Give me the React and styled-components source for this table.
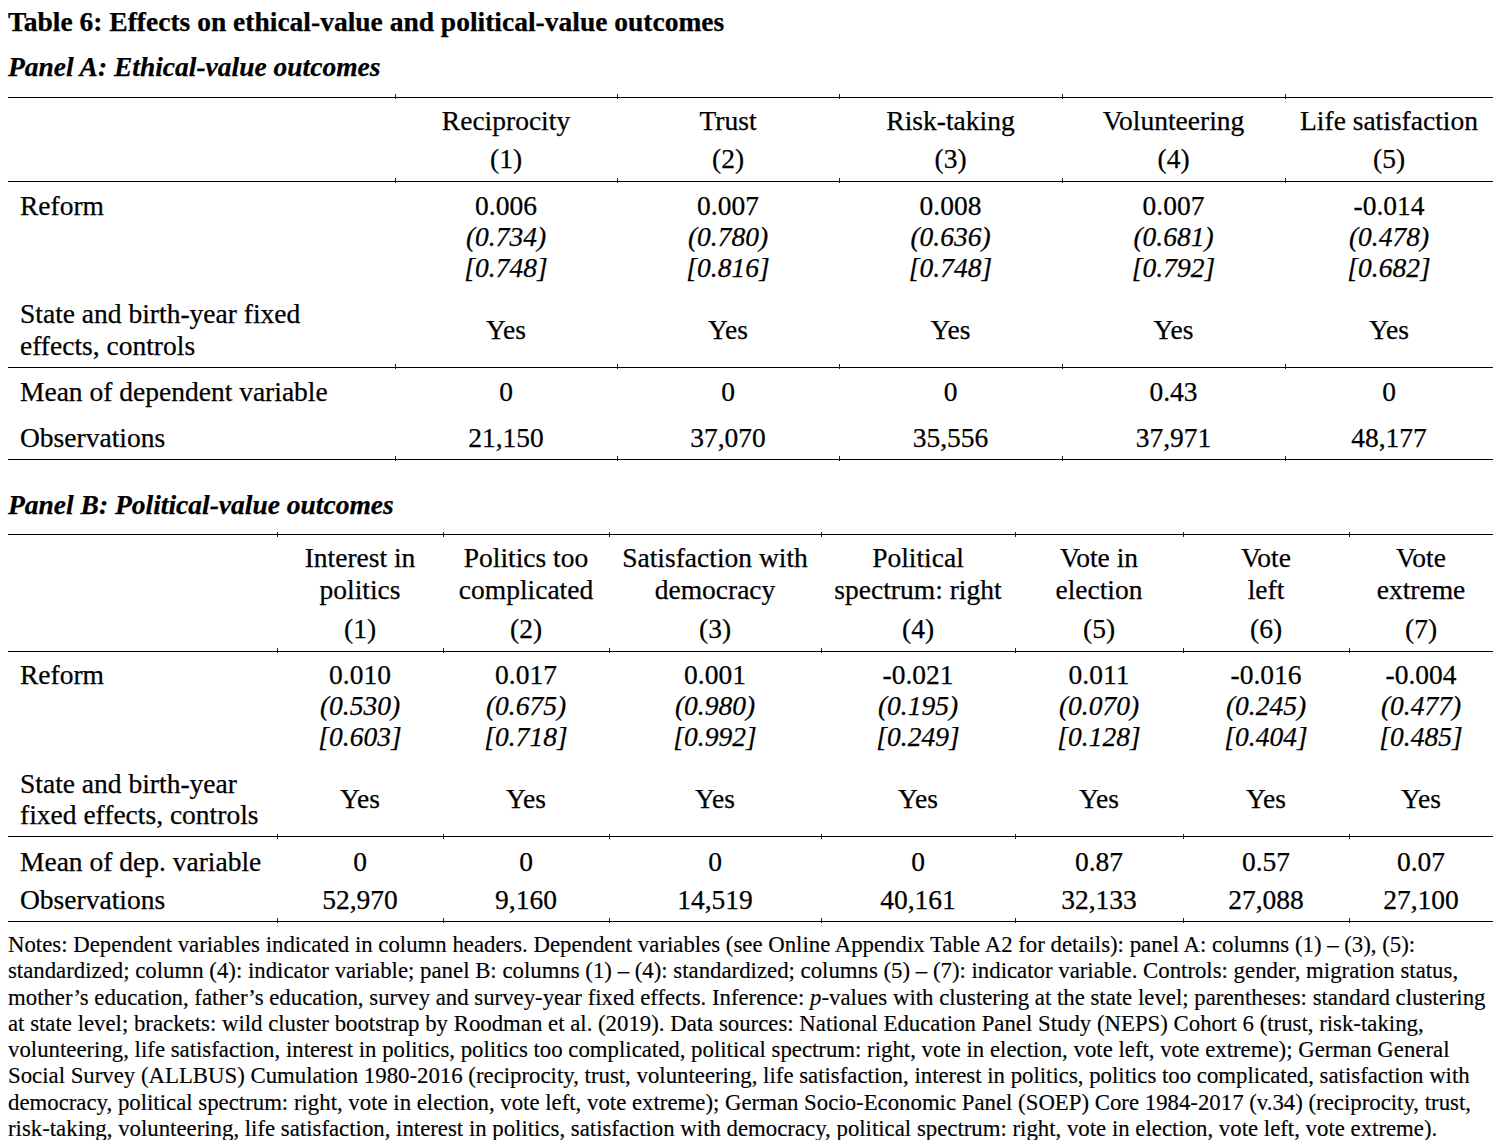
import React from "react";
import styled, { createGlobalStyle } from "styled-components";

const GlobalStyle = createGlobalStyle`
  html, body {
    margin: 0;
    padding: 0;
    background: #fff;
  }
  body {
    font-family: "Liberation Serif", "Times New Roman", serif;
    color: #000;
    -webkit-text-stroke: 0.25px #000;
  }
`;

const colsA = "387px 222px 222px 223px 223px 208px";
const colsB = "269px 166px 166px 212px 194px 168px 166px 144px";

const Page = styled.div`
  width: 1508px;
  box-sizing: border-box;
  padding: 5.5px 15px 0 8px;
  font-size: 27.5px;
  line-height: 31px;
`;

const Title = styled.h1`
  margin: 0 0 14px;
  font-size: 27.5px;
  line-height: 31px;
  font-weight: bold;
`;

const PanelTitle = styled.h2`
  margin: ${(p) => p.$mt || 0}px 0 ${(p) => p.$mb || 14}px;
  font-size: 27.5px;
  line-height: 31px;
  font-weight: bold;
  font-style: italic;
`;

const Rule = styled.div`
  display: grid;
  grid-template-columns: ${(p) => p.$cols};
  border-top: 1.5px solid #000;
  height: 0;
`;

const Tick = styled.span`
  position: relative;
  &::before {
    content: "";
    position: absolute;
    left: -0.5px;
    top: -3.5px;
    width: 1px;
    height: 5px;
    background: #222;
  }
`;

const Row = styled.div`
  display: grid;
  grid-template-columns: ${(p) => p.$cols};
  padding-top: ${(p) => p.$pt}px;
  padding-bottom: ${(p) => p.$pb}px;
  line-height: ${(p) => p.$lh || 31}px;
  align-items: ${(p) => (p.$top ? "start" : "center")};
`;

const Label = styled.div`
  padding-left: 12px;
  white-space: nowrap;
`;

const Cell = styled.div`
  text-align: center;
  white-space: nowrap;
`;

const HeadLine = styled.div`
  line-height: ${(p) => p.$lh || 31}px;
`;

const HeadNum = styled.div`
  margin-top: 7px;
  line-height: 31px;
`;

const Ital = styled.div`
  font-style: italic;
`;

const Notes = styled.div`
  margin-top: 10.5px;
  font-size: 22.8px;
  line-height: 26.3px;
  white-space: nowrap;
  -webkit-text-stroke: 0.15px #000;
`;

function TickRule({ cols, n }) {
  return (
    <Rule $cols={cols}>
      <span />
      {Array.from({ length: n }).map((_, i) => (
        <Tick key={i} />
      ))}
    </Rule>
  );
}

const panelA = {
  heads: ["Reciprocity", "Trust", "Risk-taking", "Volunteering", "Life satisfaction"],
  coef: ["0.006", "0.007", "0.008", "0.007", "-0.014"],
  p: ["(0.734)", "(0.780)", "(0.636)", "(0.681)", "(0.478)"],
  w: ["[0.748]", "[0.816]", "[0.748]", "[0.792]", "[0.682]"],
  mean: ["0", "0", "0", "0.43", "0"],
  obs: ["21,150", "37,070", "35,556", "37,971", "48,177"],
};

const panelB = {
  heads: [
    ["Interest in", "politics"],
    ["Politics too", "complicated"],
    ["Satisfaction with", "democracy"],
    ["Political", "spectrum: right"],
    ["Vote in", "election"],
    ["Vote", "left"],
    ["Vote", "extreme"],
  ],
  coef: ["0.010", "0.017", "0.001", "-0.021", "0.011", "-0.016", "-0.004"],
  p: ["(0.530)", "(0.675)", "(0.980)", "(0.195)", "(0.070)", "(0.245)", "(0.477)"],
  w: ["[0.603]", "[0.718]", "[0.992]", "[0.249]", "[0.128]", "[0.404]", "[0.485]"],
  mean: ["0", "0", "0", "0", "0.87", "0.57", "0.07"],
  obs: ["52,970", "9,160", "14,519", "40,161", "32,133", "27,088", "27,100"],
};

const notes = [
  "Notes: Dependent variables indicated in column headers. Dependent variables (see Online Appendix Table A2 for details): panel A: columns (1) – (3), (5):",
  "standardized; column (4): indicator variable; panel B: columns (1) – (4): standardized; columns (5) – (7): indicator variable. Controls: gender, migration status,",
  null,
  "at state level; brackets: wild cluster bootstrap by Roodman et al. (2019). Data sources: National Education Panel Study (NEPS) Cohort 6 (trust, risk-taking,",
  "volunteering, life satisfaction, interest in politics, politics too complicated, political spectrum: right, vote in election, vote left, vote extreme); German General",
  "Social Survey (ALLBUS) Cumulation 1980-2016 (reciprocity, trust, volunteering, life satisfaction, interest in politics, politics too complicated, satisfaction with",
  "democracy, political spectrum: right, vote in election, vote left, vote extreme); German Socio-Economic Panel (SOEP) Core 1984-2017 (v.34) (reciprocity, trust,",
  "risk-taking, volunteering, life satisfaction, interest in politics, satisfaction with democracy, political spectrum: right, vote in election, vote left, vote extreme).",
];

export default function App() {
  return (
    <Page>
      <GlobalStyle />
      <Title>Table 6: Effects on ethical-value and political-value outcomes</Title>
      <PanelTitle $mb={15}>Panel A: Ethical-value outcomes</PanelTitle>

      <TickRule cols={colsA} n={5} />
      <Row $cols={colsA} $pt={7.5} $pb={6.5}>
        <Label />
        {panelA.heads.map((h, i) => (
          <Cell key={h}>
            <HeadLine>{h}</HeadLine>
            <HeadNum>({i + 1})</HeadNum>
          </Cell>
        ))}
      </Row>
      <TickRule cols={colsA} n={5} />
      <Row $cols={colsA} $pt={8.5} $pb={7} $top>
        <Label>Reform</Label>
        {panelA.coef.map((c, i) => (
          <Cell key={i}>
            <div>{c}</div>
            <Ital>{panelA.p[i]}</Ital>
            <Ital>{panelA.w[i]}</Ital>
          </Cell>
        ))}
      </Row>
      <Row $cols={colsA} $pt={7.5} $pb={5} $lh={32}>
        <Label>
          State and birth-year fixed
          <br />
          effects, controls
        </Label>
        {panelA.coef.map((_, i) => (
          <Cell key={i}>Yes</Cell>
        ))}
      </Row>
      <TickRule cols={colsA} n={5} />
      <Row $cols={colsA} $pt={8} $pb={7}>
        <Label>Mean of dependent variable</Label>
        {panelA.mean.map((m, i) => (
          <Cell key={i}>{m}</Cell>
        ))}
      </Row>
      <Row $cols={colsA} $pt={8} $pb={6}>
        <Label>Observations</Label>
        {panelA.obs.map((o, i) => (
          <Cell key={i}>{o}</Cell>
        ))}
      </Row>
      <TickRule cols={colsA} n={5} />

      <PanelTitle $mt={29} $mb={14.5}>
        Panel B: Political-value outcomes
      </PanelTitle>

      <TickRule cols={colsB} n={7} />
      <Row $cols={colsB} $pt={7} $pb={6.5}>
        <Label />
        {panelB.heads.map((h, i) => (
          <Cell key={i}>
            <HeadLine $lh={32}>{h[0]}</HeadLine>
            <HeadLine $lh={32}>{h[1]}</HeadLine>
            <HeadNum>({i + 1})</HeadNum>
          </Cell>
        ))}
      </Row>
      <TickRule cols={colsB} n={7} />
      <Row $cols={colsB} $pt={7} $pb={7} $top>
        <Label>Reform</Label>
        {panelB.coef.map((c, i) => (
          <Cell key={i}>
            <div>{c}</div>
            <Ital>{panelB.p[i]}</Ital>
            <Ital>{panelB.w[i]}</Ital>
          </Cell>
        ))}
      </Row>
      <Row $cols={colsB} $pt={9} $pb={6.5}>
        <Label>
          State and birth-year
          <br />
          fixed effects, controls
        </Label>
        {panelB.coef.map((_, i) => (
          <Cell key={i}>Yes</Cell>
        ))}
      </Row>
      <TickRule cols={colsB} n={7} />
      <Row $cols={colsB} $pt={9} $pb={3}>
        <Label>Mean of dep. variable</Label>
        {panelB.mean.map((m, i) => (
          <Cell key={i}>{m}</Cell>
        ))}
      </Row>
      <Row $cols={colsB} $pt={4} $pb={5.5}>
        <Label>Observations</Label>
        {panelB.obs.map((o, i) => (
          <Cell key={i}>{o}</Cell>
        ))}
      </Row>
      <TickRule cols={colsB} n={7} />

      <Notes>
        {notes.map((line, i) =>
          line ? (
            <div key={i}>{line}</div>
          ) : (
            <div key={i}>
              mother’s education, father’s education, survey and survey-year fixed effects. Inference: <i>p</i>-values
              with clustering at the state level; parentheses: standard clustering
            </div>
          )
        )}
      </Notes>
    </Page>
  );
}
